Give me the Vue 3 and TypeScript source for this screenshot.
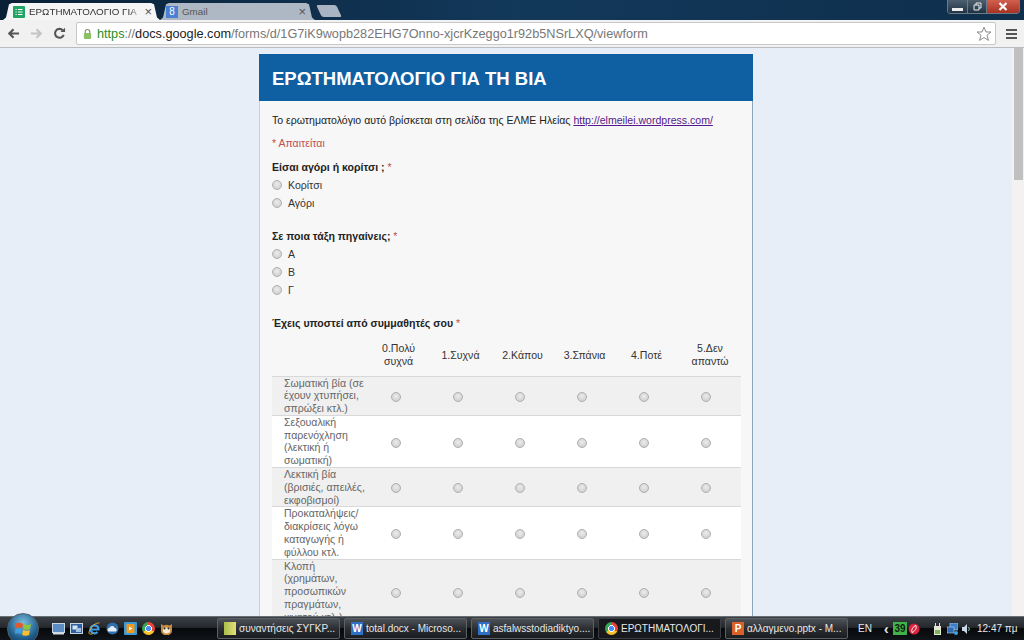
<template>
  <div class="screen">
    <div class="browser">
      <div class="tabstrip">
        <div class="tab active">
          <svg class="favicon" viewBox="0 0 12 12">
            <rect width="12" height="12" rx="1" fill="#1fa463" />
            <path d="M2.500 3.500h1.200M5 3.500h4.500M2.500 6h1.200M5 6h4.500M2.500 8.500h1.200M5 8.500h4.500" stroke="#fff" stroke-width="1" />
          </svg>
          <span class="tab-title">ΕΡΩΤΗΜΑΤΟΛΟΓΙΟ ΓΙΑ Τ</span>
          <span class="tab-x">×</span>
        </div>
        <div class="tab idle">
          <div class="g-icon">8</div>
          <span class="tab-title">Gmail</span>
          <span class="tab-x">×</span>
        </div>
        <div class="tab-new"></div>
        <div class="win-btns">
          <span class="win-btn min"><i></i></span>
          <span class="win-btn restore">
            <svg width="9" height="9" viewBox="0 0 9 9"><path d="M1 3h5v5H1zM3 3V1h5v5H6" fill="none" stroke="#eee" /></svg>
          </span>
          <span class="win-btn close">
            <svg width="10" height="9" viewBox="0 0 10 9"><path d="M1.500 1 8.500 8M8.500 1 1.500 8" stroke="#fff" stroke-width="2.200" /></svg>
          </span>
        </div>
      </div>

      <div class="toolbar">
        <svg class="nav-icon" viewBox="0 0 14 14"><path d="M13 7H3M7 2.500 2.500 7 7 11.500" fill="none" stroke="#555" stroke-width="2.400" /></svg>
        <svg class="nav-icon" viewBox="0 0 14 14"><path d="M1 7h10M7 2.500 11.500 7 7 11.500" fill="none" stroke="#c4c4c4" stroke-width="2.400" /></svg>
        <svg class="nav-icon" viewBox="0 0 14 14">
          <path d="M11.500 8.500A4.800 4.800 0 1 1 10.500 3.500" fill="none" stroke="#555" stroke-width="2.200" />
          <path d="M8 5.500h5V.8z" fill="#555" />
        </svg>
        <div class="omnibox">
          <svg class="lock" viewBox="0 0 10 12">
            <path d="M2.500 5V3.500a2.500 2.500 0 0 1 5 0V5" fill="none" stroke="#8a8f70" stroke-width="1.300" />
            <rect x="1" y="5" width="8" height="6.500" rx="1" fill="#8cc063" />
          </svg>
          <span class="url">
            <span class="scheme">https</span><span class="url-dim">://</span>docs.google.com<span class="url-dim">/forms/d/1G7iK9wopb282EHG7Onno-xjcrKzeggo1r92b5NSrLXQ/viewform</span>
          </span>
          <svg class="star" viewBox="0 0 16 16"><path d="M8 1.200 10 6h5l-4 3.200 1.500 5.200L8 11.500l-4.500 2.900L5 9.200 1 6h5z" fill="#fff" stroke="#8a8a8a" /></svg>
        </div>
        <div class="menu-icon"><i></i><i></i><i></i></div>
      </div>

      <div class="viewport">
        <div class="page">
          <div class="card">
            <div class="card-head">ΕΡΩΤΗΜΑΤΟΛΟΓΙΟ ΓΙΑ ΤΗ ΒΙΑ</div>
            <div class="card-body">
              <p class="intro">
                Το ερωτηματολόγιο αυτό βρίσκεται στη σελίδα της ΕΛΜΕ Ηλείας
                <a class="link">http://elmeilei.wordpress.com/</a>
              </p>
              <p class="required">* Απαιτείται</p>

              <div v-for="q in questions" :key="q.title" class="question">
                <div class="q-title">{{ q.title }} <span class="star-req">*</span></div>
                <label v-for="o in q.options" :key="o" class="option">
                  <span class="radio"></span>{{ o }}
                </label>
              </div>

              <div class="q-title grid-title">Έχεις υποστεί από συμμαθητές σου <span class="star-req">*</span></div>
              <table class="grid">
                <thead>
                  <tr>
                    <th class="row-head"></th>
                    <th v-for="c in columns" :key="c">{{ c }}</th>
                  </tr>
                </thead>
                <tbody>
                  <tr v-for="r in rows" :key="r">
                    <td class="row-label">{{ r }}</td>
                    <td v-for="c in columns" :key="c" class="cell"><span class="radio"></span></td>
                  </tr>
                </tbody>
              </table>
            </div>
          </div>
        </div>
        <div class="scrollbar"><div class="thumb"></div></div>
      </div>
    </div>

    <div class="taskbar">
      <div class="orb">
        <svg width="17" height="16" viewBox="0 0 17 16">
          <path d="M1 2.500c2-1 4-1 7 .3L7.200 7.500C4.500 6.300 2.500 6.300.4 7.200z" fill="#e8562c" />
          <path d="M9 3.200c2.500 1 4.500 1 7-.2l-.9 4.900c-2.300 1.100-4.500 1-7-.1z" fill="#8cc63f" />
          <path d="M.2 8.300c2.200-1 4.200-.9 6.800.3L6.200 13.300C3.700 12 1.700 12 -.5 13z" fill="#3f9ee0" />
          <path d="M8 9c2.500 1 4.600 1.100 6.900.1l-.9 4.800c-2.300 1.100-4.500 1-6.900 0z" fill="#fbc02d" />
        </svg>
      </div>
      <div class="quick">
        <svg class="q-ico" viewBox="0 0 13 13">
          <rect x=".5" y="1.500" width="12" height="9" fill="#5b8cc4" stroke="#c6d4e2" />
          <rect x="1" y="10.500" width="11" height="2" fill="#d6dee6" />
        </svg>
        <svg class="q-ico" viewBox="0 0 13 13">
          <rect x=".5" y="1.500" width="12" height="10" fill="#2f5f9c" stroke="#c6d4e2" />
          <rect x="2.500" y="3.500" width="5" height="4" fill="#d6e4f2" />
          <rect x="6" y="6" width="5" height="4" fill="#9fc0e2" />
        </svg>
        <svg class="q-ico" viewBox="0 0 13 13">
          <path d="M3 7.500h7.500A4 4 0 1 0 9.500 10" fill="none" stroke="#3f9be0" stroke-width="2.200" />
          <path d="M11.500 1C8 .5 3 4 1 10c-.5 2 1 3 4 1.500" fill="none" stroke="#e8b23a" stroke-width=".9" />
        </svg>
        <svg class="q-ico" viewBox="0 0 13 13">
          <circle cx="6.500" cy="6.500" r="6" fill="#2f6fae" />
          <path d="M2.500 9.500a2 2 0 0 1 1-3.700 2.800 2.800 0 0 1 5.300.3 1.800 1.800 0 0 1 .9 3.400z" fill="#e8eef4" />
        </svg>
        <svg class="q-ico" viewBox="0 0 13 13">
          <rect width="13" height="13" rx="1" fill="#3b9ad8" />
          <rect x="2.500" y="2" width="8" height="9" fill="#f29a1f" />
          <path d="M5 4.500 8.500 6.500 5 8.500z" fill="#fff" />
        </svg>
        <span class="chrome small"></span>
        <svg class="q-ico" viewBox="0 0 13 13">
          <path d="M1 2 3.500 3.500a6 6 0 0 1 6 0L12 2v7a5 4 0 0 1-11 0z" fill="#c58a3f" />
          <ellipse cx="6.500" cy="8.500" rx="3.600" ry="3" fill="#f4ead6" />
          <circle cx="4.600" cy="6.500" r=".9" fill="#222" /><circle cx="8.400" cy="6.500" r=".9" fill="#222" />
        </svg>
      </div>
      <div v-for="t in tasks" :key="t.label" class="task" :class="{ current: t.kind === 'chrome' }">
        <span class="task-ico" :class="t.kind">{{ t.glyph }}</span>
        <span class="task-label">{{ t.label }}</span>
      </div>
      <div class="tray">
        <span class="lang">EN</span>
        <span class="chev">‹</span>
        <span class="badge-num">39</span>
        <svg class="badge-red" viewBox="0 0 12 12">
          <circle cx="6" cy="6" r="5.500" fill="#d8243c" />
          <path d="M4 9.500c-1-3 1-6 4-7 .8 2.500-.5 5.500-4 7z" fill="none" stroke="#fff" stroke-width="1" />
        </svg>
        <svg class="tray-ico" viewBox="0 0 11 12">
          <rect x="2" y="3" width="7" height="9" fill="#e6e6d4" />
          <rect x="3" y="7" width="5" height="4" fill="#7cb45a" />
          <path d="M3.500 0v3M7.500 0v3" stroke="#ddd" />
        </svg>
        <svg class="tray-ico" viewBox="0 0 11 12">
          <rect x="3" y="0" width="8" height="7" fill="#3b7fc8" stroke="#bcd4ec" stroke-width=".6" />
          <rect x="0" y="4" width="7" height="6" fill="#2f6ab0" stroke="#bcd4ec" stroke-width=".6" />
          <circle cx="9" cy="10" r="2" fill="#3da5e0" />
        </svg>
        <svg class="tray-ico vol" viewBox="0 0 9 12">
          <path d="M0 4h2l3-3v10L2 8H0z" fill="#c8d8e8" />
          <path d="M6.500 4a3 3 0 0 1 0 4" fill="none" stroke="#8fc8a8" />
        </svg>
        <span class="clock">12:47 πμ</span>
      </div>
    </div>
  </div>
</template>

<script setup lang="ts">
const questions = [
  { title: 'Είσαι αγόρι ή κορίτσι ;', options: ['Κορίτσι', 'Αγόρι'] },
  { title: 'Σε ποια τάξη πηγαίνεις;', options: ['Α', 'Β', 'Γ'] },
]

const columns = ['0.Πολύ συχνά', '1.Συχνά', '2.Κάπου', '3.Σπάνια', '4.Ποτέ', '5.Δεν απαντώ']

const rows = [
  'Σωματική βία (σε έχουν χτυπήσει, σπρώξει κτλ.)',
  'Σεξουαλική παρενόχληση (λεκτική ή σωματική)',
  'Λεκτική βία (βρισιές, απειλές, εκφοβισμοί)',
  'Προκαταλήψεις/ διακρίσεις λόγω καταγωγής ή φύλλου κτλ.',
  'Κλοπή (χρημάτων, προσωπικών πραγμάτων, κινητού κτλ.)',
]

const tasks = [
  { label: 'συναντήσεις ΣΥΓΚΡ...', kind: 'folder', glyph: '' },
  { label: 'total.docx - Microso...', kind: 'word', glyph: 'W' },
  { label: 'asfalwsstodiadiktyo....', kind: 'word', glyph: 'W' },
  { label: 'ΕΡΩΤΗΜΑΤΟΛΟΓΙ...', kind: 'chrome', glyph: '' },
  { label: 'αλλαγμενο.pptx - M...', kind: 'ppt', glyph: 'P' },
]
</script>

<style>
html,
body {
  margin: 0;
  overflow: hidden;
}
</style>

<style scoped>
.screen {
  width: 1024px;
  height: 640px;
  display: flex;
  flex-direction: column;
  overflow: hidden;
  font-family: 'Liberation Sans', Arial, sans-serif;
}

.browser {
  flex: 1;
  min-height: 0;
  display: flex;
  flex-direction: column;
}

.tabstrip {
  height: 20px;
  flex: none;
  display: flex;
  align-items: flex-end;
  padding-left: 3px;
  background: linear-gradient(90deg, #0a2036, #12385a 50%, #0f2f4c);
}

.tab {
  height: 17px;
  display: flex;
  align-items: center;
  gap: 4px;
  box-sizing: border-box;
  font-size: 9.800px;
  white-space: nowrap;
  clip-path: polygon(0 100%, 3px 85%, 6px 8%, 9px 0, calc(100% - 9px) 0, calc(100% - 6px) 8%, calc(100% - 3px) 85%, 100% 100%);
}

.tab.active {
  width: 157px;
  padding: 0 8px 0 10px;
  background: #f5f5f5;
  color: #333;
}

.tab.idle {
  width: 155px;
  padding: 0 9px 0 6px;
  background: #aeb8c4;
  color: #555;
}

.favicon {
  width: 12px;
  height: 12px;
  flex: none;
}

.g-icon {
  width: 12px;
  height: 12px;
  flex: none;
  background: #4a7fd6;
  color: #fff;
  font-size: 10px;
  line-height: 12px;
  text-align: center;
}

.tab-title {
  flex: 1;
  overflow: hidden;
}

.active .tab-title {
  -webkit-mask-image: linear-gradient(90deg, #000 92%, transparent);
  mask-image: linear-gradient(90deg, #000 92%, transparent);
}

.tab-x {
  font-size: 13px;
  color: #555;
}

.tab-new {
  width: 20px;
  height: 12px;
  margin: 0 0 3px 4px;
  background: #a9b5c2;
  border-radius: 2px;
  transform: skewX(25deg);
}

.win-btns {
  margin-left: auto;
  margin-right: 4px;
  align-self: flex-start;
  display: flex;
  height: 13px;
  border: 1px solid #6d7b88;
  border-top: 0;
  border-radius: 0 0 4px 4px;
  overflow: hidden;
}

.win-btn {
  width: 20px;
  display: flex;
  align-items: center;
  justify-content: center;
  box-sizing: border-box;
  border-right: 1px solid #6d7b88;
  background: linear-gradient(#4e6070, #1f3344);
}

.win-btn.min i {
  width: 11px;
  height: 3px;
  margin-top: 5px;
  background: #eee;
}

.win-btn.restore {
  width: 19px;
}

.win-btn.close {
  width: 32px;
  border-right: 0;
  background: linear-gradient(#d0604f, #a83222);
}

.toolbar {
  height: 28px;
  flex: none;
  box-sizing: border-box;
  display: flex;
  align-items: center;
  padding: 0 7px 0 7px;
  gap: 10px;
  background: #f1f1f1;
  border-bottom: 1px solid #b9bdc2;
}

.nav-icon {
  width: 13px;
  height: 13px;
  flex: none;
}

.omnibox {
  flex: 1;
  height: 21px;
  min-width: 0;
  display: flex;
  align-items: center;
  padding: 0 3px 0 6px;
  gap: 5px;
  background: #fff;
  border: 1px solid #c8c8c8;
  border-radius: 2px;
}

.lock {
  width: 9px;
  height: 12px;
  flex: none;
}

.url {
  flex: 1;
  font-size: 12.700px;
  color: #222;
  white-space: nowrap;
}

.scheme {
  color: #1f8f1f;
}

.url-dim {
  color: #777;
}

.star {
  width: 16px;
  height: 16px;
  flex: none;
}

.menu-icon {
  width: 11px;
  flex: none;
  display: flex;
  flex-direction: column;
  gap: 2px;
}

.menu-icon i {
  height: 2px;
  background: #555;
}

.viewport {
  flex: 1;
  min-height: 0;
  display: flex;
  background: #e8eef8;
}

.page {
  flex: 1;
  min-width: 0;
  overflow: hidden;
  padding-top: 6px;
  display: flex;
  justify-content: center;
}

.card {
  width: 494px;
  box-sizing: border-box;
  border: 1px solid #8fa5bb;
  border-left-color: #c5d0dc;
  border-top: 0;
  background: #f7f7f7;
  align-self: flex-start;
}

.card-head {
  height: 47px;
  line-height: 49px;
  margin: 0 -1px;
  padding-left: 13px;
  background: #0f60a3;
  color: #fff;
  font-size: 18.500px;
  font-weight: bold;
  white-space: nowrap;
}

.card-body {
  padding: 13px 12px 0 12px;
  color: #222;
  font-size: 10.550px;
}

.intro {
  margin: 0;
  line-height: 13px;
  white-space: nowrap;
}

.link {
  color: #551a8b;
  text-decoration: underline;
}

.required {
  margin: 10px 0 0;
  line-height: 13px;
  color: #c0504d;
}

.question {
  margin-bottom: 18px;
}

.required + .question {
  margin-top: 11px;
}

.q-title {
  font-weight: bold;
  line-height: 13px;
  color: #222;
}

.star-req {
  font-weight: normal;
  color: #c0504d;
}

.option {
  display: flex;
  align-items: center;
  height: 18px;
  margin-top: 2px;
  gap: 6px;
  color: #333;
}

.option + .option {
  margin-top: 0;
}

.radio {
  display: inline-block;
  width: 10px;
  height: 10px;
  box-sizing: border-box;
  flex: none;
  border-radius: 50%;
  border: 1px solid #b0b0b0;
  background: radial-gradient(circle at 50% 40%, #ececec, #c8c8c8);
}

.grid-title {
  margin-top: 18px;
}

.grid {
  width: 468px;
  margin-top: 5px;
  border-collapse: collapse;
  table-layout: fixed;
  color: #333;
}

.grid th {
  width: 62px;
  height: 41px;
  box-sizing: border-box;
  padding: 0 0 0 5px;
  font-weight: normal;
  line-height: 13px;
  text-align: center;
}

.grid th:last-child {
  width: 66px;
  padding-left: 4px;
}

.grid th.row-head {
  width: 93px;
}

.grid td {
  padding: 0;
  border-top: 1px solid #d8d8d8;
}

.grid td:last-child {
  padding-right: 4px;
}

.grid tbody tr:nth-child(odd) {
  background: #f0f0f0;
}

.grid tbody tr:nth-child(even) {
  background: #fff;
}

.grid td.row-label {
  padding-left: 12px;
  line-height: 12.800px;
  color: #666;
}

.cell {
  text-align: center;
}

.cell .radio {
  vertical-align: middle;
}

.scrollbar {
  width: 12px;
  flex: none;
  padding-left: 2px;
  box-sizing: border-box;
  background: #f3f2f0;
}

.thumb {
  width: 9px;
  height: 132px;
  background: #c0c0c0;
}

.taskbar {
  height: 24px;
  flex: none;
  display: flex;
  align-items: center;
  position: relative;
  padding-left: 52px;
  background: linear-gradient(#3b4046 0%, #25282c 45%, #07090b 50%, #111418);
  border-top: 1px solid #6a6f74;
  box-sizing: border-box;
  color: #e8e8e8;
  font-size: 10px;
}

.orb {
  position: absolute;
  left: 7px;
  top: -4px;
  width: 32px;
  height: 32px;
  box-sizing: border-box;
  border-radius: 50%;
  background: radial-gradient(circle at 50% 30%, #7cbcdc, #1f5d8c 60%, #0c2b45);
  border: 1px solid #52606c;
  display: flex;
  align-items: center;
  justify-content: center;
}

.quick {
  display: flex;
  align-items: center;
  gap: 5px;
  width: 165px;
  flex: none;
}

.q-ico {
  width: 13px;
  height: 13px;
  flex: none;
}

.chrome {
  display: inline-block;
  border-radius: 50%;
  background:
    radial-gradient(circle, #4c8bf5 0 26%, #fff 27% 36%, transparent 37%),
    conic-gradient(#e6463a 0 33%, #f6c52c 0 66%, #3aa655 0);
  flex: none;
}

.chrome.small {
  width: 13px;
  height: 13px;
}

.task {
  width: 123px;
  height: 21px;
  flex: none;
  margin-right: 4px;
  display: flex;
  align-items: center;
  gap: 3px;
  padding-left: 6px;
  box-sizing: border-box;
  border: 1px solid #5c6166;
  border-radius: 2px;
  background: linear-gradient(#4e5257, #2b2e32 50%, #1b1d20);
  white-space: nowrap;
  overflow: hidden;
}

.task.current {
  background: #17191c;
  border-color: #3a3d41;
}

.task-ico {
  width: 12px;
  height: 13px;
  flex: none;
  font-size: 10px;
  font-weight: bold;
  line-height: 13px;
  text-align: center;
  color: #fff;
}

.task-ico.folder {
  background: linear-gradient(90deg, #a8c04a, #e7dd7c);
}

.task-ico.word {
  background: #2f6fc4;
}

.task-ico.ppt {
  background: #d9602a;
}

.task-ico.chrome {
  width: 13px;
}

.tray {
  flex: 1;
  display: flex;
  align-items: center;
  padding-left: 6px;
  font-size: 10px;
}

.lang {
  width: 26px;
}

.chev {
  width: 9px;
  font-size: 14px;
  font-weight: bold;
  line-height: 12px;
}

.badge-num {
  width: 14px;
  height: 13px;
  background: #3fb34a;
  color: #102010;
  font-weight: bold;
  line-height: 13px;
  text-align: center;
}

.badge-red {
  width: 12px;
  height: 12px;
  margin: 0 12px 0 1px;
}

.tray-ico {
  width: 11px;
  height: 12px;
  margin-right: 4px;
}

.tray-ico.vol {
  width: 9px;
  margin-right: 6px;
}

.clock {
  white-space: nowrap;
}
</style>
